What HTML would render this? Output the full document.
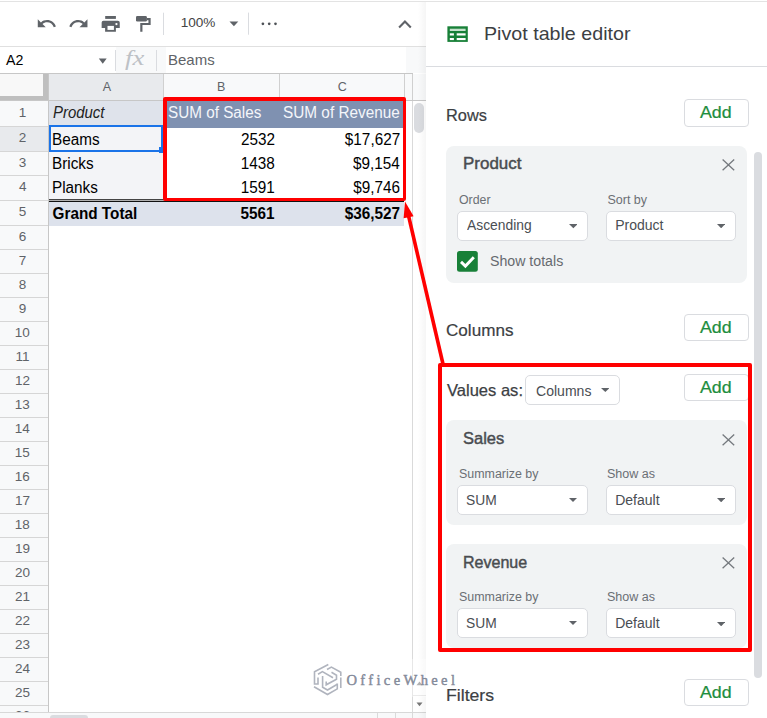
<!DOCTYPE html>
<html><head><meta charset="utf-8"><style>
html,body{margin:0;padding:0;}
body{width:767px;height:718px;overflow:hidden;position:relative;background:#fff;font-family:'Liberation Sans',sans-serif;}
.r{position:absolute;}
.t{position:absolute;white-space:nowrap;line-height:0;transform-origin:0 0;}
</style></head><body>
<div class="r" style="left:0px;top:0px;width:767px;height:46px;background:#fff;"></div>
<div class="r" style="left:0px;top:1px;width:767px;height:1px;background:#e3e3e3;"></div>
<div class="r" style="left:0px;top:46px;width:426px;height:1px;background:#e0e0e0;"></div>
<div class="r" style="left:0px;top:47px;width:426px;height:26px;background:#fff;"></div>
<div class="r" style="left:406px;top:47px;width:20px;height:26px;background:#f8f9fa;"></div>
<div class="r" style="left:0px;top:73px;width:413px;height:1px;background:#c7c7c7;"></div>
<div class="r" style="left:0px;top:74px;width:426px;height:26px;background:#f8f9fa;"></div>
<div class="r" style="left:49px;top:74px;width:114px;height:26px;background:#e8eaed;"></div>
<div class="r" style="left:0px;top:100px;width:426px;height:1px;background:#c7c7c7;"></div>
<div class="r" style="left:0px;top:74px;width:43px;height:22px;background:#f8f8f8;"></div>
<div class="r" style="left:43px;top:74px;width:5px;height:26px;background:#bfbfbf;"></div>
<div class="r" style="left:0px;top:96px;width:48px;height:4px;background:#bfbfbf;"></div>
<div class="r" style="left:163px;top:74px;width:1px;height:26px;background:#d0d0d0;"></div>
<div class="r" style="left:279px;top:74px;width:1px;height:26px;background:#d0d0d0;"></div>
<div class="r" style="left:404px;top:74px;width:1px;height:26px;background:#d0d0d0;"></div>
<div class="r" style="left:412px;top:74px;width:1px;height:26px;background:#d0d0d0;"></div>
<div class="r" style="left:0px;top:101px;width:48px;height:611px;background:#f8f9fa;"></div>
<div class="r" style="left:48px;top:74px;width:1px;height:638px;background:#c7c7c7;"></div>
<div class="r" style="left:49px;top:101px;width:363px;height:611px;background:#fff;"></div>
<div class="r" style="left:0px;top:126px;width:48px;height:1px;background:#d6d6d6;"></div>
<div class="r" style="left:0px;top:151px;width:48px;height:1px;background:#d6d6d6;"></div>
<div class="r" style="left:0px;top:175px;width:48px;height:1px;background:#d6d6d6;"></div>
<div class="r" style="left:0px;top:200px;width:48px;height:1px;background:#d6d6d6;"></div>
<div class="r" style="left:0px;top:225px;width:48px;height:1px;background:#d6d6d6;"></div>
<div class="r" style="left:0px;top:249px;width:48px;height:1px;background:#d6d6d6;"></div>
<div class="r" style="left:0px;top:273px;width:48px;height:1px;background:#d6d6d6;"></div>
<div class="r" style="left:0px;top:297px;width:48px;height:1px;background:#d6d6d6;"></div>
<div class="r" style="left:0px;top:321px;width:48px;height:1px;background:#d6d6d6;"></div>
<div class="r" style="left:0px;top:345px;width:48px;height:1px;background:#d6d6d6;"></div>
<div class="r" style="left:0px;top:369px;width:48px;height:1px;background:#d6d6d6;"></div>
<div class="r" style="left:0px;top:393px;width:48px;height:1px;background:#d6d6d6;"></div>
<div class="r" style="left:0px;top:417px;width:48px;height:1px;background:#d6d6d6;"></div>
<div class="r" style="left:0px;top:441px;width:48px;height:1px;background:#d6d6d6;"></div>
<div class="r" style="left:0px;top:465px;width:48px;height:1px;background:#d6d6d6;"></div>
<div class="r" style="left:0px;top:489px;width:48px;height:1px;background:#d6d6d6;"></div>
<div class="r" style="left:0px;top:513px;width:48px;height:1px;background:#d6d6d6;"></div>
<div class="r" style="left:0px;top:537px;width:48px;height:1px;background:#d6d6d6;"></div>
<div class="r" style="left:0px;top:561px;width:48px;height:1px;background:#d6d6d6;"></div>
<div class="r" style="left:0px;top:585px;width:48px;height:1px;background:#d6d6d6;"></div>
<div class="r" style="left:0px;top:609px;width:48px;height:1px;background:#d6d6d6;"></div>
<div class="r" style="left:0px;top:633px;width:48px;height:1px;background:#d6d6d6;"></div>
<div class="r" style="left:0px;top:657px;width:48px;height:1px;background:#d6d6d6;"></div>
<div class="r" style="left:0px;top:681px;width:48px;height:1px;background:#d6d6d6;"></div>
<div class="r" style="left:0px;top:705px;width:48px;height:1px;background:#d6d6d6;"></div>
<div class="r" style="left:0px;top:127px;width:48px;height:24px;background:#e8eaed;"></div>
<div class="r" style="left:412px;top:101px;width:1px;height:611px;background:#dadada;"></div>
<div class="r" style="left:413px;top:101px;width:13px;height:611px;background:#fff;"></div>
<div class="r" style="left:414px;top:103px;width:10px;height:30px;background:#dadce0;border-radius:5px;"></div>
<div class="r" style="left:49px;top:101px;width:114px;height:24px;background:#dfe3eb;"></div>
<div class="r" style="left:163px;top:101px;width:241px;height:27px;background:#7f91b1;"></div>
<div class="r" style="left:49px;top:127px;width:114px;height:73px;background:#f3f4f7;"></div>
<div class="r" style="left:49px;top:199px;width:355px;height:1px;background:#444;"></div>
<div class="r" style="left:49px;top:200px;width:355px;height:1px;background:#b0b0b0;"></div>
<div class="r" style="left:49px;top:201px;width:355px;height:1px;background:#111;"></div>
<div class="r" style="left:49px;top:202px;width:355px;height:24px;background:#dde2ec;"></div>
<div class="t" style="left:18.65px;top:113.12px;font-size:13.5px;color:#5f6368;font-weight:normal;font-style:normal;font-family:'Liberation Sans',sans-serif;">1</div>
<div class="t" style="left:18.85px;top:138.12px;font-size:13.5px;color:#5f6368;font-weight:normal;font-style:normal;font-family:'Liberation Sans',sans-serif;">2</div>
<div class="t" style="left:18.85px;top:162.62px;font-size:13.5px;color:#5f6368;font-weight:normal;font-style:normal;font-family:'Liberation Sans',sans-serif;">3</div>
<div class="t" style="left:18.92px;top:187.12px;font-size:13.5px;color:#5f6368;font-weight:normal;font-style:normal;font-family:'Liberation Sans',sans-serif;">4</div>
<div class="t" style="left:18.85px;top:212.12px;font-size:13.5px;color:#5f6368;font-weight:normal;font-style:normal;font-family:'Liberation Sans',sans-serif;">5</div>
<div class="t" style="left:18.79px;top:236.62px;font-size:13.5px;color:#5f6368;font-weight:normal;font-style:normal;font-family:'Liberation Sans',sans-serif;">6</div>
<div class="t" style="left:18.85px;top:260.62px;font-size:13.5px;color:#5f6368;font-weight:normal;font-style:normal;font-family:'Liberation Sans',sans-serif;">7</div>
<div class="t" style="left:18.82px;top:284.62px;font-size:13.5px;color:#5f6368;font-weight:normal;font-style:normal;font-family:'Liberation Sans',sans-serif;">8</div>
<div class="t" style="left:18.85px;top:308.62px;font-size:13.5px;color:#5f6368;font-weight:normal;font-style:normal;font-family:'Liberation Sans',sans-serif;">9</div>
<div class="t" style="left:14.84px;top:332.62px;font-size:13.5px;color:#5f6368;font-weight:normal;font-style:normal;font-family:'Liberation Sans',sans-serif;">10</div>
<div class="t" style="left:15.41px;top:356.62px;font-size:13.5px;color:#5f6368;font-weight:normal;font-style:normal;font-family:'Liberation Sans',sans-serif;">11</div>
<div class="t" style="left:14.94px;top:380.62px;font-size:13.5px;color:#5f6368;font-weight:normal;font-style:normal;font-family:'Liberation Sans',sans-serif;">12</div>
<div class="t" style="left:14.87px;top:404.62px;font-size:13.5px;color:#5f6368;font-weight:normal;font-style:normal;font-family:'Liberation Sans',sans-serif;">13</div>
<div class="t" style="left:14.80px;top:428.62px;font-size:13.5px;color:#5f6368;font-weight:normal;font-style:normal;font-family:'Liberation Sans',sans-serif;">14</div>
<div class="t" style="left:14.87px;top:452.62px;font-size:13.5px;color:#5f6368;font-weight:normal;font-style:normal;font-family:'Liberation Sans',sans-serif;">15</div>
<div class="t" style="left:14.87px;top:476.62px;font-size:13.5px;color:#5f6368;font-weight:normal;font-style:normal;font-family:'Liberation Sans',sans-serif;">16</div>
<div class="t" style="left:14.94px;top:500.62px;font-size:13.5px;color:#5f6368;font-weight:normal;font-style:normal;font-family:'Liberation Sans',sans-serif;">17</div>
<div class="t" style="left:14.87px;top:524.62px;font-size:13.5px;color:#5f6368;font-weight:normal;font-style:normal;font-family:'Liberation Sans',sans-serif;">18</div>
<div class="t" style="left:14.91px;top:548.62px;font-size:13.5px;color:#5f6368;font-weight:normal;font-style:normal;font-family:'Liberation Sans',sans-serif;">19</div>
<div class="t" style="left:15.01px;top:572.62px;font-size:13.5px;color:#5f6368;font-weight:normal;font-style:normal;font-family:'Liberation Sans',sans-serif;">20</div>
<div class="t" style="left:15.07px;top:596.62px;font-size:13.5px;color:#5f6368;font-weight:normal;font-style:normal;font-family:'Liberation Sans',sans-serif;">21</div>
<div class="t" style="left:15.11px;top:620.62px;font-size:13.5px;color:#5f6368;font-weight:normal;font-style:normal;font-family:'Liberation Sans',sans-serif;">22</div>
<div class="t" style="left:15.04px;top:644.62px;font-size:13.5px;color:#5f6368;font-weight:normal;font-style:normal;font-family:'Liberation Sans',sans-serif;">23</div>
<div class="t" style="left:14.97px;top:668.62px;font-size:13.5px;color:#5f6368;font-weight:normal;font-style:normal;font-family:'Liberation Sans',sans-serif;">24</div>
<div class="t" style="left:15.04px;top:692.62px;font-size:13.5px;color:#5f6368;font-weight:normal;font-style:normal;font-family:'Liberation Sans',sans-serif;">25</div>
<div class="t" style="left:15.04px;top:715.52px;font-size:13.5px;color:#5f6368;font-weight:normal;font-style:normal;font-family:'Liberation Sans',sans-serif;">26</div>
<div class="t" style="left:102.70px;top:87.27px;font-size:12.5px;color:#5f6368;font-weight:normal;font-style:normal;font-family:'Liberation Sans',sans-serif;">A</div>
<div class="t" style="left:217.10px;top:87.27px;font-size:12.5px;color:#5f6368;font-weight:normal;font-style:normal;font-family:'Liberation Sans',sans-serif;">B</div>
<div class="t" style="left:337.68px;top:87.27px;font-size:12.5px;color:#5f6368;font-weight:normal;font-style:normal;font-family:'Liberation Sans',sans-serif;">C</div>
<div class="t" style="left:52.95px;top:112.70px;font-size:15.3px;color:#222;font-weight:normal;font-style:italic;font-family:'Liberation Sans',sans-serif;transform:scale(0.9761,1.0600);transform-origin:0 5.305px;">Product</div>
<div class="t" style="left:167.81px;top:112.90px;font-size:15.3px;color:#f4f6fa;font-weight:normal;font-style:normal;font-family:'Liberation Sans',sans-serif;transform:scale(0.9985,1.0600);transform-origin:0 5.305px;">SUM of Sales</div>
<div class="t" style="left:282.81px;top:112.90px;font-size:15.3px;color:#f4f6fa;font-weight:normal;font-style:normal;font-family:'Liberation Sans',sans-serif;transform:scale(1.0032,1.0600);transform-origin:0 5.305px;">SUM of Revenue</div>
<div class="t" style="left:51.98px;top:139.70px;font-size:15.3px;color:#000;font-weight:normal;font-style:normal;font-family:'Liberation Sans',sans-serif;transform:scale(1.0000,1.0600);transform-origin:0 5.305px;">Beams</div>
<div class="t" style="left:51.98px;top:164.10px;font-size:15.3px;color:#000;font-weight:normal;font-style:normal;font-family:'Liberation Sans',sans-serif;transform:scale(1.0000,1.0600);transform-origin:0 5.305px;">Bricks</div>
<div class="t" style="left:51.98px;top:187.90px;font-size:15.3px;color:#000;font-weight:normal;font-style:normal;font-family:'Liberation Sans',sans-serif;transform:scale(1.0000,1.0600);transform-origin:0 5.305px;">Planks</div>
<div class="t" style="left:240.92px;top:139.70px;font-size:15.3px;color:#000;font-weight:normal;font-style:normal;font-family:'Liberation Sans',sans-serif;transform:scale(1.0000,1.0600);transform-origin:0 5.305px;">2532</div>
<div class="t" style="left:240.77px;top:164.10px;font-size:15.3px;color:#000;font-weight:normal;font-style:normal;font-family:'Liberation Sans',sans-serif;transform:scale(1.0000,1.0600);transform-origin:0 5.305px;">1438</div>
<div class="t" style="left:240.85px;top:187.90px;font-size:15.3px;color:#000;font-weight:normal;font-style:normal;font-family:'Liberation Sans',sans-serif;transform:scale(1.0000,1.0600);transform-origin:0 5.305px;">1591</div>
<div class="t" style="left:344.86px;top:139.70px;font-size:15.3px;color:#000;font-weight:normal;font-style:normal;font-family:'Liberation Sans',sans-serif;transform:scale(1.0000,1.0600);transform-origin:0 5.305px;">$17,627</div>
<div class="t" style="left:353.04px;top:164.10px;font-size:15.3px;color:#000;font-weight:normal;font-style:normal;font-family:'Liberation Sans',sans-serif;transform:scale(1.0000,1.0600);transform-origin:0 5.305px;">$9,154</div>
<div class="t" style="left:353.19px;top:187.90px;font-size:15.3px;color:#000;font-weight:normal;font-style:normal;font-family:'Liberation Sans',sans-serif;transform:scale(1.0000,1.0600);transform-origin:0 5.305px;">$9,746</div>
<div class="t" style="left:52.59px;top:213.50px;font-size:15.3px;color:#000;font-weight:bold;font-style:normal;font-family:'Liberation Sans',sans-serif;transform:scale(1.0000,1.0600);transform-origin:0 5.305px;">Grand Total</div>
<div class="t" style="left:240.54px;top:213.50px;font-size:15.3px;color:#000;font-weight:bold;font-style:normal;font-family:'Liberation Sans',sans-serif;transform:scale(1.0000,1.0600);transform-origin:0 5.305px;">5561</div>
<div class="t" style="left:344.70px;top:213.50px;font-size:15.3px;color:#000;font-weight:bold;font-style:normal;font-family:'Liberation Sans',sans-serif;transform:scale(1.0000,1.0600);transform-origin:0 5.305px;">$36,527</div>
<div class="r" style="left:49px;top:125px;width:114px;height:27px;background:transparent;box-sizing:border-box;border:2px solid #1a73e8;"></div>
<div class="r" style="left:159px;top:147px;width:5px;height:6px;background:#1a73e8;"></div>
<div class="r" style="left:163px;top:97px;width:243px;height:104px;box-sizing:border-box;border-style:solid;border-color:#f00;border-width:4px 3px 3px 4px;border-radius:2px;"></div>
<div class="t" style="left:180.68px;top:22.68px;font-size:13.6px;color:#444;font-weight:normal;font-style:normal;font-family:'Liberation Sans',sans-serif;">100%</div>
<div class="t" style="left:6.00px;top:60.28px;font-size:14.2px;color:#000;font-weight:normal;font-style:normal;font-family:'Liberation Sans',sans-serif;">A2</div>
<div class="t" style="left:167.50px;top:59.91px;font-size:14.4px;color:#5f6368;font-weight:normal;font-style:normal;font-family:'Liberation Sans',sans-serif;transform:scale(1.0411,1.0000);transform-origin:0 4.992px;">Beams</div>
<svg class="r" style="left:35.73px;top:13.1px" width="21.24" height="21.24" viewBox="0 0 24 24"><path fill="#5f6368" d="M12.5 8c-2.65 0-5.05.99-6.9 2.6L2 7v9h9l-3.62-3.62c1.39-1.16 3.16-1.88 5.12-1.88 3.540 0 6.55 2.31 7.6 5.5l2.37-.78C21.08 11.03 17.15 8 12.5 8z"/></svg>
<svg class="r" style="left:68.24px;top:13.1px" width="21.24" height="21.24" viewBox="0 0 24 24"><path fill="#5f6368" d="M18.4 10.6C16.55 8.99 14.15 8 11.5 8c-4.65 0-8.58 3.03-9.960 7.22L3.9 16c1.05-3.19 4.05-5.5 7.6-5.5 1.95 0 3.73.72 5.12 1.88L13 16h9V7l-3.6 3.6z"/></svg>
<svg class="r" style="left:0;top:0" width="300" height="70">
<rect x="105.2" y="16" width="10.7" height="2.9" fill="#5f6368"/>
<path d="M101.65 22.6 Q101.65 20.8 103.45 20.8 L117.95 20.8 Q119.75 20.8 119.75 22.6 L119.75 28.1 L115.9 28.1 L115.9 31.7 L105.1 31.7 L105.1 28.1 L101.65 28.1 Z" fill="#5f6368"/>
<rect x="107.5" y="25.9" width="6.4" height="4" fill="#fff"/>
<circle cx="116.45" cy="24.05" r="1.15" fill="#fff"/>
<rect x="136" y="16" width="10.9" height="5.5" rx="1.3" fill="#5f6368"/>
<path d="M146.9 19.1 L149.55 19.1 L149.55 24 L141.35 24 L141.35 31.7" stroke="#5f6368" stroke-width="2.2" fill="none"/>
<rect x="163" y="12.7" width="1" height="22.3" fill="#dadce0"/>
<rect x="248" y="12.6" width="1" height="22.1" fill="#dadce0"/>
<polygon points="229.5,21.6 238.3,21.6 233.9,26.2" fill="#5f6368"/>
<circle cx="262.9" cy="23.8" r="1.35" fill="#4d5156"/>
<circle cx="269.2" cy="23.8" r="1.35" fill="#4d5156"/>
<circle cx="275.5" cy="23.8" r="1.35" fill="#4d5156"/>
<polygon points="98.8,58.6 106.7,58.6 102.75,63.8" fill="#5f6368"/>
</svg>
<svg class="r" style="left:396px;top:17.5px" width="18" height="13"><path d="M3.1 9.4 L8.95 3.5 L14.8 9.4" stroke="#5f6368" stroke-width="2.1" fill="none"/></svg>
<div class="r" style="left:116px;top:47px;width:50px;height:26px;background:#f8f9fa;"></div>
<div class="r" style="left:115px;top:50px;width:1px;height:21px;background:#dadce0;"></div>
<div class="r" style="left:155.5px;top:50px;width:1px;height:21px;background:#dadce0;"></div>
<div class="t" style="left:124.63px;top:58.22px;font-size:21px;color:#bdc1c6;font-weight:normal;font-style:italic;font-family:'Liberation Serif',serif;transform:scale(1.2698,1.0000);transform-origin:0 7.281px;">fx</div>
<div class="r" style="left:413px;top:694.5px;width:13px;height:1px;background:#e0e0e0;"></div>
<svg class="r" style="left:416px;top:701.5px" width="7" height="5"><polygon points="0.5,0.5 6.5,0.5 3.5,4.2" fill="#777"/></svg>
<svg class="r" style="left:416px;top:680.5px" width="7" height="5"><polygon points="0.5,4.2 6.5,4.2 3.5,0.5" fill="#888"/></svg>
<svg class="r" style="left:380px;top:714.5px" width="30" height="4"><rect x="4.5" y="1.5" width="1.2" height="3" fill="#666"/><rect x="21.5" y="1.5" width="1.2" height="3" fill="#666"/></svg>
<div class="r" style="left:0px;top:712px;width:426px;height:1px;background:#d8d8d8;"></div>
<div class="r" style="left:0px;top:713px;width:426px;height:5px;background:#f8f9fa;"></div>
<div class="r" style="left:50px;top:714.5px;width:38px;height:6px;background:#dadce0;border-radius:3px;"></div>
<div class="r" style="left:376.5px;top:713px;width:1px;height:5px;background:#dadada;"></div>
<div class="r" style="left:394.5px;top:713px;width:1px;height:5px;background:#dadada;"></div>
<div class="r" style="left:412px;top:713px;width:1px;height:5px;background:#dadada;"></div>
<div class="r" style="left:418px;top:2px;width:8px;height:716px;background:linear-gradient(90deg,rgba(0,0,0,0),rgba(0,0,0,0.04));"></div>
<div class="r" style="left:426px;top:2px;width:341px;height:716px;background:#fff;"></div>
<div class="r" style="left:426px;top:66px;width:341px;height:1px;background:#dadce0;"></div>
<svg class="r" style="left:0;top:0" width="480" height="50">
<rect x="447.4" y="26.3" width="20.4" height="15.6" fill="#188038"/>
<rect x="449.8" y="28.7" width="15.8" height="2.3" fill="#c6e2cd"/>
<rect x="449.8" y="33.3" width="4.1" height="2.2" fill="#fff"/>
<rect x="456.7" y="33.3" width="8.9" height="2.2" fill="#fff"/>
<rect x="449.8" y="38" width="4.1" height="2.1" fill="#fff"/>
<rect x="456.7" y="38" width="8.9" height="2.1" fill="#fff"/>
</svg>
<div class="t" style="left:484.33px;top:33.89px;font-size:18.5px;color:#3c4043;font-weight:normal;font-style:normal;font-family:'Liberation Sans',sans-serif;transform:scale(1.0627,1.0000);transform-origin:0 6.414px;">Pivot table editor</div>
<div class="t" style="left:445.69px;top:115.08px;font-size:16.5px;color:#3c4043;font-weight:normal;font-style:normal;font-family:'Liberation Sans',sans-serif;transform:scale(0.9910,1.0000);transform-origin:0 5.721px;-webkit-text-stroke:0.2px #3c4043;">Rows</div>
<div class="t" style="left:445.85px;top:330.08px;font-size:16.5px;color:#3c4043;font-weight:normal;font-style:normal;font-family:'Liberation Sans',sans-serif;transform:scale(1.0363,1.0000);transform-origin:0 5.721px;-webkit-text-stroke:0.2px #3c4043;">Columns</div>
<div class="t" style="left:446.62px;top:389.68px;font-size:16.5px;color:#3c4043;font-weight:normal;font-style:normal;font-family:'Liberation Sans',sans-serif;transform:scale(1.0020,1.0000);transform-origin:0 5.721px;-webkit-text-stroke:0.25px #3c4043;">Values as:</div>
<div class="t" style="left:445.59px;top:695.38px;font-size:16.5px;color:#3c4043;font-weight:normal;font-style:normal;font-family:'Liberation Sans',sans-serif;transform:scale(1.0702,1.0000);transform-origin:0 5.721px;-webkit-text-stroke:0.2px #3c4043;">Filters</div>
<div class="r" style="left:684px;top:99px;width:65px;height:28px;box-sizing:border-box;border:1px solid #dadce0;border-radius:4px;background:#fff"></div>
<div class="t" style="left:700.40px;top:113.32px;font-size:15.8px;color:#1e8e3e;font-weight:normal;font-style:normal;font-family:'Liberation Sans',sans-serif;transform:scale(1.1256,1.0000);transform-origin:0 5.478px;-webkit-text-stroke:0.2px #1e8e3e;">Add</div>
<div class="r" style="left:684px;top:314px;width:65px;height:27px;box-sizing:border-box;border:1px solid #dadce0;border-radius:4px;background:#fff"></div>
<div class="t" style="left:700.40px;top:328.32px;font-size:15.8px;color:#1e8e3e;font-weight:normal;font-style:normal;font-family:'Liberation Sans',sans-serif;transform:scale(1.1256,1.0000);transform-origin:0 5.478px;-webkit-text-stroke:0.2px #1e8e3e;">Add</div>
<div class="r" style="left:684px;top:374px;width:65px;height:27px;box-sizing:border-box;border:1px solid #dadce0;border-radius:4px;background:#fff"></div>
<div class="t" style="left:700.40px;top:388.32px;font-size:15.8px;color:#1e8e3e;font-weight:normal;font-style:normal;font-family:'Liberation Sans',sans-serif;transform:scale(1.1256,1.0000);transform-origin:0 5.478px;-webkit-text-stroke:0.2px #1e8e3e;">Add</div>
<div class="r" style="left:684px;top:679px;width:65px;height:27px;box-sizing:border-box;border:1px solid #dadce0;border-radius:4px;background:#fff"></div>
<div class="t" style="left:700.40px;top:693.32px;font-size:15.8px;color:#1e8e3e;font-weight:normal;font-style:normal;font-family:'Liberation Sans',sans-serif;transform:scale(1.1256,1.0000);transform-origin:0 5.478px;-webkit-text-stroke:0.2px #1e8e3e;">Add</div>
<div class="r" style="left:446px;top:146px;width:300.5px;height:136.60000000000002px;background:#f1f3f4;border-radius:8px"></div>
<div class="t" style="left:462.64px;top:164.21px;font-size:16.7px;color:#494c50;font-weight:normal;font-style:normal;font-family:'Liberation Sans',sans-serif;transform:scale(1.0158,1.0000);transform-origin:0 5.790px;-webkit-text-stroke:0.45px #494c50;">Product</div>
<svg class="r" style="left:722.10px;top:159.40px" width="13" height="12"><path d="M0.6 0.6 L12.2 11.2 M12.2 0.6 L0.6 11.2" stroke="#75797e" stroke-width="1.3" fill="none"/></svg>
<div class="t" style="left:458.54px;top:199.97px;font-size:12.5px;color:#6b6f74;font-weight:normal;font-style:normal;font-family:'Liberation Sans',sans-serif;transform:scale(0.9876,1.0000);transform-origin:0 4.334px;">Order</div>
<div class="t" style="left:607.44px;top:199.97px;font-size:12.5px;color:#6b6f74;font-weight:normal;font-style:normal;font-family:'Liberation Sans',sans-serif;">Sort by</div>
<div class="r" style="left:456.90px;top:210.60px;width:131.20px;height:30.50px;box-sizing:border-box;border:1px solid #dadce0;border-radius:5px;background:#fff"></div>
<div class="t" style="left:467.20px;top:225.45px;font-size:14px;color:#4a4e53;font-weight:normal;font-style:normal;font-family:'Liberation Sans',sans-serif;transform:scale(0.9881,1.0000);transform-origin:0 4.854px;">Ascending</div>
<svg class="r" style="left:568.7px;top:224.3px" width="8.7" height="4.3"><polygon points="0,0 8.7,0 4.35,4.3" fill="#5f6368"/></svg>
<div class="r" style="left:606.10px;top:210.60px;width:130.10px;height:30.50px;box-sizing:border-box;border:1px solid #dadce0;border-radius:5px;background:#fff"></div>
<div class="t" style="left:615.18px;top:225.45px;font-size:14px;color:#4a4e53;font-weight:normal;font-style:normal;font-family:'Liberation Sans',sans-serif;">Product</div>
<svg class="r" style="left:717.2px;top:223.6px" width="8.3" height="4.3"><polygon points="0,0 8.3,0 4.15,4.3" fill="#5f6368"/></svg>
<svg class="r" style="left:457.3px;top:251px" width="21" height="21"><rect x="0" y="0" width="20.8" height="20.8" rx="2.5" fill="#188038"/><path d="M4 10.9 L8.4 15.1 L16.8 6.3" stroke="#fff" stroke-width="2.9" fill="none"/></svg>
<div class="t" style="left:490.46px;top:261.45px;font-size:14px;color:#666a6f;font-weight:normal;font-style:normal;font-family:'Liberation Sans',sans-serif;transform:scale(1.0118,1.0000);transform-origin:0 4.854px;">Show totals</div>
<div class="r" style="left:525.00px;top:375.30px;width:94.80px;height:29.40px;box-sizing:border-box;border:1px solid #dadce0;border-radius:5px;background:#fff"></div>
<div class="t" style="left:535.50px;top:390.75px;font-size:14px;color:#4a4e53;font-weight:normal;font-style:normal;font-family:'Liberation Sans',sans-serif;transform:scale(1.0030,1.0000);transform-origin:0 4.854px;">Columns</div>
<svg class="r" style="left:600.7px;top:388.4px" width="8.6" height="4"><polygon points="0,0 8.6,0 4.3,4" fill="#5f6368"/></svg>
<div class="r" style="left:446px;top:420px;width:300.5px;height:104.70000000000005px;background:#f1f3f4;border-radius:8px"></div>
<div class="t" style="left:463.06px;top:439.11px;font-size:16.7px;color:#494c50;font-weight:normal;font-style:normal;font-family:'Liberation Sans',sans-serif;transform:scale(0.9873,1.0000);transform-origin:0 5.790px;-webkit-text-stroke:0.45px #494c50;">Sales</div>
<svg class="r" style="left:722.10px;top:433.80px" width="13" height="12"><path d="M0.6 0.6 L12.2 11.2 M12.2 0.6 L0.6 11.2" stroke="#75797e" stroke-width="1.3" fill="none"/></svg>
<div class="t" style="left:458.64px;top:473.87px;font-size:12.5px;color:#6b6f74;font-weight:normal;font-style:normal;font-family:'Liberation Sans',sans-serif;transform:scale(0.9948,1.0000);transform-origin:0 4.334px;">Summarize by</div>
<div class="t" style="left:607.44px;top:473.87px;font-size:12.5px;color:#6b6f74;font-weight:normal;font-style:normal;font-family:'Liberation Sans',sans-serif;transform:scale(1.0035,1.0000);transform-origin:0 4.334px;">Show as</div>
<div class="r" style="left:457.00px;top:484.90px;width:131.00px;height:29.90px;box-sizing:border-box;border:1px solid #dadce0;border-radius:5px;background:#fff"></div>
<div class="t" style="left:466.38px;top:499.85px;font-size:14px;color:#4a4e53;font-weight:normal;font-style:normal;font-family:'Liberation Sans',sans-serif;transform:scale(0.9853,1.0000);transform-origin:0 4.854px;">SUM</div>
<svg class="r" style="left:568.6px;top:497.7px" width="8" height="4"><polygon points="0,0 8,0 4.0,4" fill="#5f6368"/></svg>
<div class="r" style="left:606.10px;top:484.90px;width:130.10px;height:29.90px;box-sizing:border-box;border:1px solid #dadce0;border-radius:5px;background:#fff"></div>
<div class="t" style="left:615.18px;top:499.85px;font-size:14px;color:#4a4e53;font-weight:normal;font-style:normal;font-family:'Liberation Sans',sans-serif;">Default</div>
<svg class="r" style="left:717.2px;top:498px" width="8.3" height="4.3"><polygon points="0,0 8.3,0 4.15,4.3" fill="#5f6368"/></svg>
<div class="r" style="left:446px;top:543.5px;width:300.5px;height:104.70000000000005px;background:#f1f3f4;border-radius:8px"></div>
<div class="t" style="left:462.52px;top:562.61px;font-size:16.7px;color:#494c50;font-weight:normal;font-style:normal;font-family:'Liberation Sans',sans-serif;transform:scale(0.9612,1.0000);transform-origin:0 5.790px;-webkit-text-stroke:0.45px #494c50;">Revenue</div>
<svg class="r" style="left:722.10px;top:557.30px" width="13" height="12"><path d="M0.6 0.6 L12.2 11.2 M12.2 0.6 L0.6 11.2" stroke="#75797e" stroke-width="1.3" fill="none"/></svg>
<div class="t" style="left:458.64px;top:597.37px;font-size:12.5px;color:#6b6f74;font-weight:normal;font-style:normal;font-family:'Liberation Sans',sans-serif;transform:scale(0.9948,1.0000);transform-origin:0 4.334px;">Summarize by</div>
<div class="t" style="left:607.44px;top:597.37px;font-size:12.5px;color:#6b6f74;font-weight:normal;font-style:normal;font-family:'Liberation Sans',sans-serif;transform:scale(1.0035,1.0000);transform-origin:0 4.334px;">Show as</div>
<div class="r" style="left:457.00px;top:608.40px;width:131.00px;height:29.90px;box-sizing:border-box;border:1px solid #dadce0;border-radius:5px;background:#fff"></div>
<div class="t" style="left:466.38px;top:623.35px;font-size:14px;color:#4a4e53;font-weight:normal;font-style:normal;font-family:'Liberation Sans',sans-serif;transform:scale(0.9853,1.0000);transform-origin:0 4.854px;">SUM</div>
<svg class="r" style="left:568.6px;top:621.2px" width="8" height="4"><polygon points="0,0 8,0 4.0,4" fill="#5f6368"/></svg>
<div class="r" style="left:606.10px;top:608.40px;width:130.10px;height:29.90px;box-sizing:border-box;border:1px solid #dadce0;border-radius:5px;background:#fff"></div>
<div class="t" style="left:615.18px;top:623.35px;font-size:14px;color:#4a4e53;font-weight:normal;font-style:normal;font-family:'Liberation Sans',sans-serif;">Default</div>
<svg class="r" style="left:717.2px;top:621.5px" width="8.3" height="4.3"><polygon points="0,0 8.3,0 4.15,4.3" fill="#5f6368"/></svg>
<div class="r" style="left:753.5px;top:152.3px;width:8.7px;height:525.4px;background:#dadce0;border-radius:4.3px;"></div>
<div class="r" style="left:438px;top:363px;width:314px;height:289px;box-sizing:border-box;border:4px solid #f00;border-radius:2px;"></div>
<svg class="r" style="left:0;top:0" width="767" height="718"><line x1="443" y1="364" x2="408.6" y2="216" stroke="#f00" stroke-width="3.6"/><polygon points="405,201.5 413.6,216.2 403.6,218.3" fill="#f00"/></svg>
<div class="r" style="left:307px;top:659px;width:119px;height:38px;background:rgba(255,255,255,0.35)"></div>
<svg class="r" style="left:0;top:0" width="460" height="718" fill="none" stroke="#b0b4be" stroke-width="1.6" stroke-linejoin="miter">
<path d="M328.3,664.5 L314.5,671.8 L314.5,684 L318,684 L318,677.5"/>
<path d="M314,686.8 L327.5,694.5 L337.3,688.9 L337.3,683.5"/>
<path d="M340.8,677.5 L340.8,688"/>
<path d="M327,669.5 L331.4,667.1 L340.8,672.2 L340.8,676"/>
<path d="M333,677.8 L322.4,671.6 L318,674.2"/>
<path d="M322.6,676 L322.6,687.2 L327.5,690 L337.3,684.3"/>
<path d="M326.2,681.5 L326.2,684.8 L336.5,679.2 L336.5,675.2 L331.5,672.3"/>
</svg>
<div class="t" style="left:346.42px;top:679.54px;font-size:14.6px;color:rgba(125,132,148,0.9);font-weight:normal;font-style:normal;font-family:'Liberation Serif',serif;letter-spacing:3.35px;-webkit-text-stroke:0.5px rgba(125,132,148,0.9);">OfficeWheel</div>
</body></html>
